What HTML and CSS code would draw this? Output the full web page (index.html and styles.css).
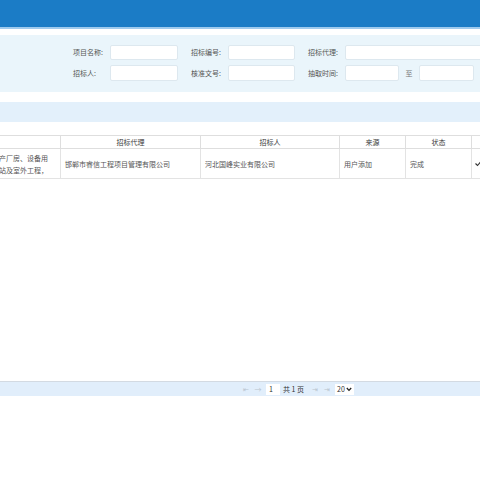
FILE: index.html
```html
<!DOCTYPE html>
<html lang="zh">
<head>
<meta charset="utf-8">
<link rel="stylesheet" href="styles.css">
</head>
<body>
<div class="topbar"></div>
<div class="topline"></div>
<div class="search">
  <div class="frow">
    <label class="lbl">项目名称:</label><span class="inp w68"></span>
    <label class="lbl sp">招标编号:</label><span class="inp w67"></span>
    <label class="lbl sp">招标代理:</label><span class="inp wide"></span>
  </div>
  <div class="frow">
    <label class="lbl">招标人:</label><span class="inp w68"></span>
    <label class="lbl sp">核准文号:</label><span class="inp w67"></span>
    <label class="lbl sp">抽取时间:</label><span class="inp w54"></span>
    <span class="to">至</span><span class="inp w55"></span>
  </div>
</div>
<div class="toolbar"></div>
<div class="grid-wrap">
  <table class="grid">
    <colgroup>
      <col class="c1"><col class="c2"><col class="c3"><col class="c4"><col class="c5"><col class="c6">
    </colgroup>
    <thead>
      <tr><th></th><th>招标代理</th><th>招标人</th><th>来源</th><th>状态</th><th></th></tr>
    </thead>
    <tbody>
      <tr>
        <td class="name">生产厂房、设备用<br>油站及室外工程，</td>
        <td>邯郸市睿信工程项目管理有限公司</td>
        <td>河北国峰实业有限公司</td>
        <td>用户添加</td>
        <td>完成</td>
        <td class="op"><svg width="6" height="6" viewBox="0 0 6 6"><path d="M0.5 2.5 L2.5 4.5 L5.5 1" fill="none" stroke="#333" stroke-width="1.1"/></svg></td>
      </tr>
    </tbody>
  </table>
</div>
<div class="spacer"></div>
<div class="pager">
  <span class="pbtn">⇤</span>
  <span class="pbtn">→</span>
  <span class="pinput">1</span>
  <span class="ptext">共 1 页</span>
  <span class="pbtn">⇥</span>
  <span class="pbtn">⇥</span>
  <span class="psel">20<svg width="6" height="5" viewBox="0 0 6 5"><path d="M0.8 1 L3 3.4 L5.2 1" fill="none" stroke="#222" stroke-width="1.3"/></svg></span>
</div>
</body>
</html>
```
FILE: styles.css
```css
* { box-sizing: border-box; }
html, body { margin: 0; padding: 0; background: #fff; }
body {
  font-family: "Noto Sans CJK SC", "Liberation Sans", sans-serif;
  font-size: 7px;
  color: #555;
  width: 480px;
  overflow: hidden;
}
.topbar { height: 27px; background: #1b7cc6; }
.topline { height: 2px; background: #9fcbee; margin-bottom: 6px; }
.search {
  background: #eaf5fb;
  height: 57px;
  padding: 10px 0 0 73px;
  display: flex;
  flex-direction: column;
  gap: 5px;
  overflow: hidden;
}
.frow { display: flex; align-items: center; height: 15px; white-space: nowrap; }
.frow > * { flex: none; }
.frow + .frow { height: 16px; }
.lbl { width: 37px; color: #555; line-height: 15px; }
.lbl.sp { margin-left: 13px; }
.inp {
  display: block;
  height: 100%;
  background: #fff;
  border: 1px solid #dde8ef;
  border-radius: 2px;
}
.w68 { width: 68px; }
.w67 { width: 67px; }
.w54 { width: 54px; }
.w55 { width: 55px; }
.wide { width: 140px; }
.to { width: 20px; text-align: center; color: #777; }
.toolbar { height: 20px; background: #e3f0fb; margin-top: 10px; }
.grid-wrap { margin-top: 13px; overflow: hidden; }
.grid {
  border-collapse: collapse;
  table-layout: fixed;
  margin-left: -13px;
  width: 520px;
}
.c1 { width: 73px; }
.c2 { width: 140px; }
.c3 { width: 139px; }
.c4 { width: 66px; }
.c5 { width: 66px; }
.c6 { width: 36px; }
.grid th {
  height: 13px;
  font-weight: normal;
  color: #3a3a3a;
  border: 1px solid #dedede;
  padding: 0;
  line-height: 11px;
}
.grid td {
  height: 30px;
  border: 1px solid #e3e3e3;
  padding: 0 4px;
  color: #555;
  line-height: 12px;
  white-space: nowrap;
  overflow: hidden;
}
.grid td.op { padding-left: 3px; }
.spacer { height: 202px; }
.pager {
  height: 15px;
  background: #e1eefb;
  border-top: 1px solid #d3dae2;
  display: flex;
  align-items: center;
  padding-left: 240px;
  white-space: nowrap;
}
.pbtn { color: #b9c4cf; width: 12px; font-size: 7px; text-align: center; }
.pinput {
  width: 14px; height: 11px; background: #fff; margin: 0 3px 0 2px;
  line-height: 11px; padding-left: 3px; color: #333;
}
.ptext { color: #333; margin-right: 5px; }
.psel {
  display: flex; align-items: center; gap: 1px;
  height: 11px; background: #fff; padding: 0 2px; margin-left: 2px; color: #333;
}
```
